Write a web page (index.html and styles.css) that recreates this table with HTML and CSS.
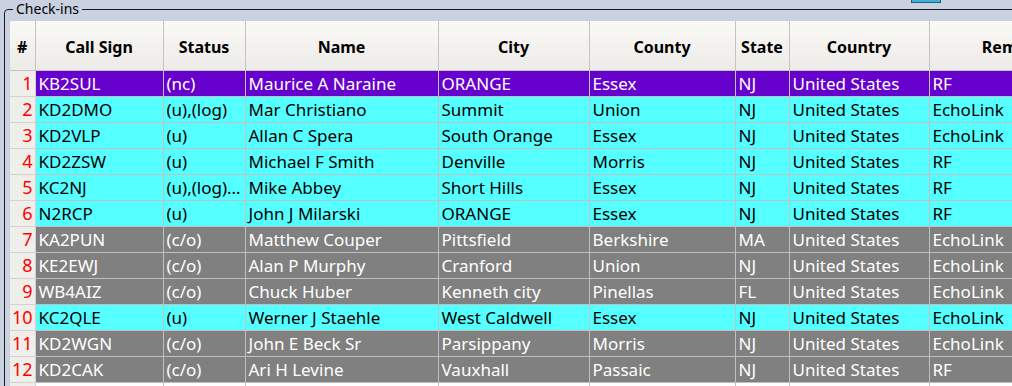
FILE: index.html
```html
<!DOCTYPE html>
<html>
<head>
<meta charset="utf-8">
<link rel="stylesheet" href="styles.css">
</head>
<body>
<div class="topbtn"></div>
<div class="group">
  <span class="legend">Check-ins</span>
  <div class="view">
    <table class="grid">
      <colgroup>
        <col class="c-num"><col class="c-call"><col class="c-status"><col class="c-name"><col class="c-city"><col class="c-county"><col class="c-state"><col class="c-country"><col class="c-rem">
      </colgroup>
      <thead>
        <tr><th class="num">#</th><th>Call Sign</th><th>Status</th><th>Name</th><th>City</th><th>County</th><th>State</th><th>Country</th><th>Remarks</th></tr>
      </thead>
      <tbody>
        <tr class="purple"><td class="num">1</td><td>KB2SUL</td><td>(nc)</td><td>Maurice A Naraine</td><td>ORANGE</td><td>Essex</td><td>NJ</td><td>United States</td><td>RF</td></tr>
        <tr class="cyan"><td class="num">2</td><td>KD2DMO</td><td>(u),(log)</td><td>Mar Christiano</td><td>Summit</td><td>Union</td><td>NJ</td><td>United States</td><td>EchoLink</td></tr>
        <tr class="cyan"><td class="num">3</td><td>KD2VLP</td><td>(u)</td><td>Allan C Spera</td><td>South Orange</td><td>Essex</td><td>NJ</td><td>United States</td><td>EchoLink</td></tr>
        <tr class="cyan"><td class="num">4</td><td>KD2ZSW</td><td>(u)</td><td>Michael F Smith</td><td>Denville</td><td>Morris</td><td>NJ</td><td>United States</td><td>RF</td></tr>
        <tr class="cyan"><td class="num">5</td><td>KC2NJ</td><td>(u),(log),(nc)</td><td>Mike Abbey</td><td>Short Hills</td><td>Essex</td><td>NJ</td><td>United States</td><td>RF</td></tr>
        <tr class="cyan"><td class="num">6</td><td>N2RCP</td><td>(u)</td><td>John J Milarski</td><td>ORANGE</td><td>Essex</td><td>NJ</td><td>United States</td><td>RF</td></tr>
        <tr class="gray"><td class="num">7</td><td>KA2PUN</td><td>(c/o)</td><td>Matthew Couper</td><td>Pittsfield</td><td>Berkshire</td><td>MA</td><td>United States</td><td>EchoLink</td></tr>
        <tr class="gray"><td class="num">8</td><td>KE2EWJ</td><td>(c/o)</td><td>Alan P Murphy</td><td>Cranford</td><td>Union</td><td>NJ</td><td>United States</td><td>EchoLink</td></tr>
        <tr class="gray"><td class="num">9</td><td>WB4AIZ</td><td>(c/o)</td><td>Chuck Huber</td><td>Kenneth city</td><td>Pinellas</td><td>FL</td><td>United States</td><td>EchoLink</td></tr>
        <tr class="cyan"><td class="num">10</td><td>KC2QLE</td><td>(u)</td><td>Werner J Staehle</td><td>West Caldwell</td><td>Essex</td><td>NJ</td><td>United States</td><td>EchoLink</td></tr>
        <tr class="gray"><td class="num">11</td><td>KD2WGN</td><td>(c/o)</td><td>John E Beck Sr</td><td>Parsippany</td><td>Morris</td><td>NJ</td><td>United States</td><td>EchoLink</td></tr>
        <tr class="gray"><td class="num">12</td><td>KD2CAK</td><td>(c/o)</td><td>Ari H Levine</td><td>Vauxhall</td><td>Passaic</td><td>NJ</td><td>United States</td><td>RF</td></tr>
        <tr class="blank"><td class="num"></td><td></td><td></td><td></td><td></td><td></td><td></td><td></td><td></td></tr>
      </tbody>
    </table>
  </div>
</div>
</body>
</html>
```

FILE: styles.css
```css
html, body {
  margin: 0;
  padding: 0;
  height: 100%;
  overflow: hidden;
}
body {
  background: #cad2e2;
  font-family: "Noto Sans", "DejaVu Sans", sans-serif;
  position: relative;
}
.topbtn {
  position: absolute;
  left: 911px;
  top: -4px;
  width: 28px;
  height: 5px;
  background: #3cb2d6;
  border: 1px solid #2a5c7a;
  box-sizing: content-box;
}
.group {
  position: relative;
  margin: 9px 0 0 4px;
  width: 1100px;
  height: 500px;
  border: 1px solid #1a1a1a;
  border-radius: 4px 0 0 0;
  padding: 11px 0 0 5px;
  box-sizing: border-box;
}
.legend {
  position: absolute;
  left: 8px;
  top: -10px;
  padding: 0 3px 0 3px;
  background: #cad2e2;
  font-size: 14px;
  line-height: 18px;
  color: #000;
}
.view {
  overflow: hidden;
  background: #fff;
}
.grid {
  border-collapse: collapse;
  table-layout: fixed;
  width: 1095px;
  font-size: 17px;
}
.c-num { width: 25px; }
.c-call { width: 128px; }
.c-status { width: 82px; }
.c-name { width: 193px; }
.c-city { width: 151px; }
.c-county { width: 146px; }
.c-state { width: 54px; }
.c-country { width: 140px; }
.c-rem { width: 176px; }

.grid th {
  height: 47px;
  padding: 2px 3px 0 3px;
  background: linear-gradient(#fbf9f6, #edebe7);
  border: 1px solid #c6c4c0;
  border-top: none;
  font-weight: bold;
  font-size: 16px;
  color: #000;
  text-align: center;
  white-space: nowrap;
  overflow: hidden;
}
.grid th:first-child { border-left: none; }
.grid td {
  height: 25px;
  padding: 0 3px 0 3px;
  border: 1px solid #c0c0c0;
  white-space: nowrap;
  overflow: hidden;
  text-overflow: ellipsis;
  line-height: 25px;
}
.grid td:first-child { border-left: none; }
.grid td.num {
  background: #f0eeea;
  color: #ff0000;
  text-align: right;
  padding: 0 2px 0 0;
  border-color: #d4d2ce;
  font-size: 18px;
}
.purple td { background: #6600cc; color: #ffffff; }
.cyan td { background: #55ffff; color: #000000; }
.gray td { background: #808080; color: #ffffff; }
.blank td { background: #ffffff; }
```
